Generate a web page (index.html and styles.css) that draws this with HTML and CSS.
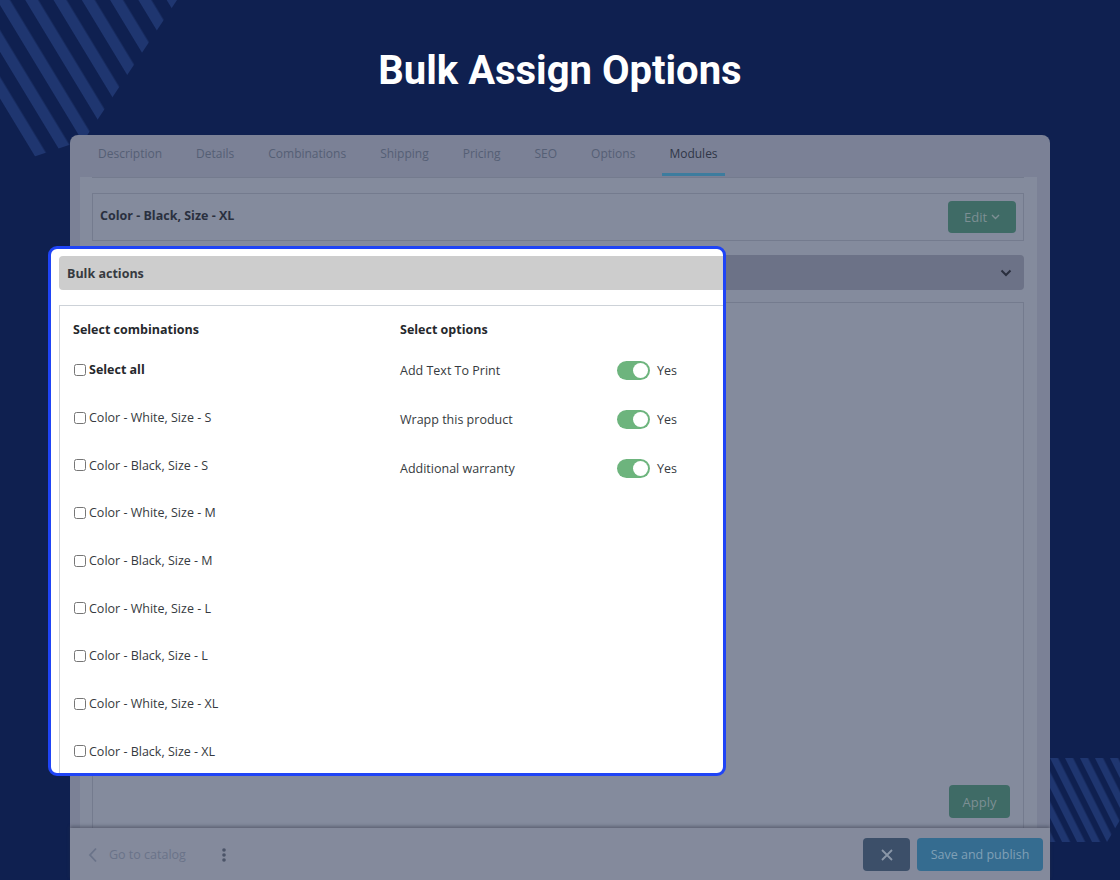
FILE: index.html
```html
<!DOCTYPE html>
<html lang="en">
<head>
    <meta charset="UTF-8">
    <meta name="viewport" content="width=device-width, initial-scale=1.0">
    <title>Bulk Assign Options</title>
    <link rel="stylesheet" href="styles.css">
</head>
<body>
    <!-- decorative stripes -->
    <svg class="stripes stripes-tl" width="190" height="165" viewBox="0 0 190 165">
        <defs>
            <pattern id="stripeTl" x="21.6" y="0" width="24.2" height="200" patternUnits="userSpaceOnUse" patternTransform="rotate(-31.2)">
                <rect x="0" y="-100" width="11.1" height="400" fill="#1f3670"></rect>
            </pattern>
        </defs>
        <polygon points="0,0 177,0 84,140 30,158 0,112" fill="url(#stripeTl)"></polygon>
    </svg>
    <svg class="stripes stripes-br" width="70" height="90" viewBox="0 0 70 90">
        <defs>
            <pattern id="stripeBr" x="0" y="0" width="13.4" height="200" patternUnits="userSpaceOnUse" patternTransform="rotate(-26.6)">
                <rect x="0" y="-100" width="7.2" height="400" fill="#1f3670"></rect>
            </pattern>
        </defs>
        <polygon points="0,0 70,0 70,62 57,84 0,84" fill="url(#stripeBr)"></polygon>
    </svg>

    <h1 class="title">Bulk Assign Options</h1>

    <div class="card">
        <nav class="tabs">
            <span class="tab">Description</span>
            <span class="tab">Details</span>
            <span class="tab">Combinations</span>
            <span class="tab">Shipping</span>
            <span class="tab">Pricing</span>
            <span class="tab">SEO</span>
            <span class="tab">Options</span>
            <span class="tab active">Modules</span>
        </nav>
        <div class="card-body">
            <div class="inner">
                <div class="combo-row">
                    <span class="combo-name">Color - Black, Size - XL</span>
                    <button class="btn-green btn-edit">Edit
                        <svg width="9" height="6" viewBox="0 0 9 6"><path d="M1 1l3.5 3.5L8 1" fill="none" stroke="currentColor" stroke-width="1.4"/></svg>
                    </button>
                </div>
                <div class="bulk-bar">
                    <svg width="12" height="8" viewBox="0 0 12 8"><path d="M1.5 1.5l4.5 4.5 4.5-4.5" fill="none" stroke="#2a2f3e" stroke-width="2"/></svg>
                </div>
                <div class="bulk-box">
                    <button class="btn-green btn-apply">Apply</button>
                </div>
            </div>
        </div>
        <div class="footer">
            <svg class="back-icon" width="10" height="16" viewBox="0 0 10 16"><path d="M8 1.5L2 8l6 6.5" fill="none" stroke="#6a7389" stroke-width="1.8"/></svg>
            <span class="back-text">Go to catalog</span>
            <svg class="kebab" width="4" height="14" viewBox="0 0 4 14"><circle cx="2" cy="2" r="1.8" fill="#4b5468"/><circle cx="2" cy="7" r="1.8" fill="#4b5468"/><circle cx="2" cy="12" r="1.8" fill="#4b5468"/></svg>
            <div class="footer-actions">
                <button class="btn-close">
                    <svg width="12" height="12" viewBox="0 0 12 12"><path d="M1 1l10 10M11 1L1 11" stroke="#8a97a8" stroke-width="1.8"/></svg>
                </button>
                <button class="btn-save">Save and publish</button>
            </div>
        </div>
    </div>

    <!-- highlighted bulk actions panel -->
    <div class="spotlight">
        <div class="sp-head">Bulk actions</div>
        <div class="sp-box">
            <div class="sp-col">
                <div class="sp-title">Select combinations</div>
                <ul class="combo-list">
                    <li><input type="checkbox" class="cb"><span class="strong">Select all</span></li>
                    <li><input type="checkbox" class="cb"><span>Color - White, Size - S</span></li>
                    <li><input type="checkbox" class="cb"><span>Color - Black, Size - S</span></li>
                    <li><input type="checkbox" class="cb"><span>Color - White, Size - M</span></li>
                    <li><input type="checkbox" class="cb"><span>Color - Black, Size - M</span></li>
                    <li><input type="checkbox" class="cb"><span>Color - White, Size - L</span></li>
                    <li><input type="checkbox" class="cb"><span>Color - Black, Size - L</span></li>
                    <li><input type="checkbox" class="cb"><span>Color - White, Size - XL</span></li>
                    <li><input type="checkbox" class="cb"><span>Color - Black, Size - XL</span></li>
                </ul>
            </div>
            <div class="sp-col">
                <div class="sp-title">Select options</div>
                <ul class="option-list">
                    <li><span class="opt-label">Add Text To Print</span><span class="switch"></span><span class="switch-text">Yes</span></li>
                    <li><span class="opt-label">Wrapp this product</span><span class="switch"></span><span class="switch-text">Yes</span></li>
                    <li><span class="opt-label">Additional warranty</span><span class="switch"></span><span class="switch-text">Yes</span></li>
                </ul>
            </div>
        </div>
    </div>
</body>
</html>
```

FILE: styles.css
```css
:root {
    --navy: #0f2050;
    --dim-tabs: #7b8196;
    --dim-body: #848b9d;
    --dim-border: #747b8e;
    --dim-green: #3f6b66;
    --text: #363a40;
    --heading: #25282c;
}
* {
    box-sizing: border-box;
}
body {
    margin: 0;
    width: 1120px;
    height: 880px;
    overflow: hidden;
    position: relative;
    background-color: var(--navy);
    font-family: 'Open Sans', 'Noto Sans', sans-serif;
    color: var(--text);
    padding-top: 49px;
}
.stripes {
    position: absolute;
    display: block;
}
.stripes-tl {
    left: 0;
    top: 0;
}
.stripes-br {
    left: 1050px;
    top: 758px;
}
.title {
    position: relative;
    margin: 0 0 42px;
    text-align: center;
    font-family: Roboto, 'Liberation Sans', sans-serif;
    font-weight: 700;
    font-size: 40px;
    line-height: 44px;
    color: #fff;
}
.card {
    position: relative;
    margin-left: 70px;
    width: 980px;
    height: 745px;
    border-radius: 8px 8px 0 0;
    background-color: var(--dim-tabs);
    display: flex;
    flex-direction: column;
}
.tabs {
    height: 42px;
    display: flex;
    gap: 20px;
    padding-left: 21px;
}
.tab {
    padding: 0 7px 2px;
    display: flex;
    align-items: center;
    font-size: 12px;
    color: #555f75;
    border-bottom: 3px solid transparent;
    margin-bottom: 1px;
}
.tab.active {
    color: #2f3647;
    border-bottom-color: #3d7c9e;
}
.card-body {
    flex: 1;
    margin: 0 13px 0 10px;
    padding: 0 13px 0 12px;
    background-color: var(--dim-body);
    min-height: 0;
}
.inner {
    height: 100%;
    border-top: 1px solid var(--dim-border);
    display: flex;
    flex-direction: column;
}
.combo-row {
    margin-top: 15px;
    height: 48px;
    border: 1px solid var(--dim-border);
    display: flex;
    align-items: center;
    justify-content: space-between;
    padding: 0 7px 0 7px;
}
.combo-name {
    font-size: 12.5px;
    font-weight: 700;
    color: #2a303f;
    padding-bottom: 3px;
}
.btn-green {
    border: none;
    border-radius: 4px;
    background-color: var(--dim-green);
    color: #7d8f94;
    font-family: 'Open Sans', sans-serif;
    font-size: 13px;
    padding: 0;
}
.btn-edit {
    width: 68px;
    height: 32px;
    display: flex;
    align-items: center;
    justify-content: center;
    gap: 4px;
}
.bulk-bar {
    margin-top: 14px;
    height: 35px;
    border-radius: 4px;
    background-color: #6c7287;
    display: flex;
    align-items: center;
    justify-content: flex-end;
    padding-right: 12px;
}
.bulk-box {
    flex: 1;
    margin-top: 12px;
    border: 1px solid var(--dim-border);
    border-bottom: none;
    display: flex;
    align-items: flex-end;
    justify-content: flex-end;
    padding: 0 13px 10px 0;
}
.btn-apply {
    width: 61px;
    height: 33px;
}
.footer {
    height: 52px;
    background-color: #848a9c;
    box-shadow: 0 -2px 3px rgba(50, 55, 72, 0.45);
    display: flex;
    align-items: center;
    padding: 1px 7px 0 18px;
}
.back-text {
    margin-left: 11px;
    font-size: 12.5px;
    color: #6a7389;
}
.kebab {
    margin-left: 36px;
}
.footer-actions {
    margin-left: auto;
    display: flex;
    gap: 7px;
}
.btn-close {
    width: 47px;
    height: 33px;
    border: none;
    border-radius: 4px;
    background-color: #3c4f69;
    display: flex;
    align-items: center;
    justify-content: center;
    padding: 0;
}
.btn-save {
    width: 126px;
    height: 33px;
    border: none;
    border-radius: 4px;
    background-color: #356c90;
    color: #80a0b6;
    font-family: 'Open Sans', sans-serif;
    font-size: 12.5px;
    padding: 0;
}
.spotlight {
    position: absolute;
    left: 48px;
    top: 246px;
    width: 678px;
    height: 530px;
    border: 3px solid #1f44f6;
    border-radius: 9px;
    background-color: #fff;
    overflow: hidden;
}
.sp-head {
    margin: 7px 0 0 8px;
    height: 34px;
    line-height: 35px;
    padding-left: 8px;
    background-color: #cdcdcd;
    border-radius: 4px 0 0 4px;
    font-size: 12.5px;
    font-weight: 700;
    color: var(--text);
}
.sp-box {
    margin: 15px 0 0 8px;
    height: 600px;
    border-top: 1px solid #cdd2d8;
    border-left: 1px solid #cdd2d8;
    padding: 15px 0 0 13px;
    display: grid;
    grid-template-columns: 327px 1fr;
}
.sp-title {
    font-size: 12.5px;
    font-weight: 700;
    line-height: 18px;
    color: var(--heading);
}
.combo-list,
.option-list {
    list-style: none;
    margin: 7px 0 0;
    padding: 0;
}
.combo-list li {
    height: 47.7px;
    display: flex;
    align-items: center;
    font-size: 12.5px;
}
.cb {
    width: 12px;
    height: 12px;
    margin: 0 3px 0 1px;
}
.strong {
    font-weight: 700;
    color: var(--heading);
}
.option-list li {
    height: 49px;
    display: flex;
    align-items: center;
    font-size: 12.5px;
}
.opt-label {
    width: 217px;
}
.switch {
    position: relative;
    width: 33px;
    height: 19px;
    border-radius: 10px;
    background-color: #6db47d;
}
.switch::after {
    content: "";
    position: absolute;
    right: 2px;
    top: 2px;
    width: 15px;
    height: 15px;
    border-radius: 50%;
    background-color: #fff;
}
.switch-text {
    margin-left: 7px;
}
```
